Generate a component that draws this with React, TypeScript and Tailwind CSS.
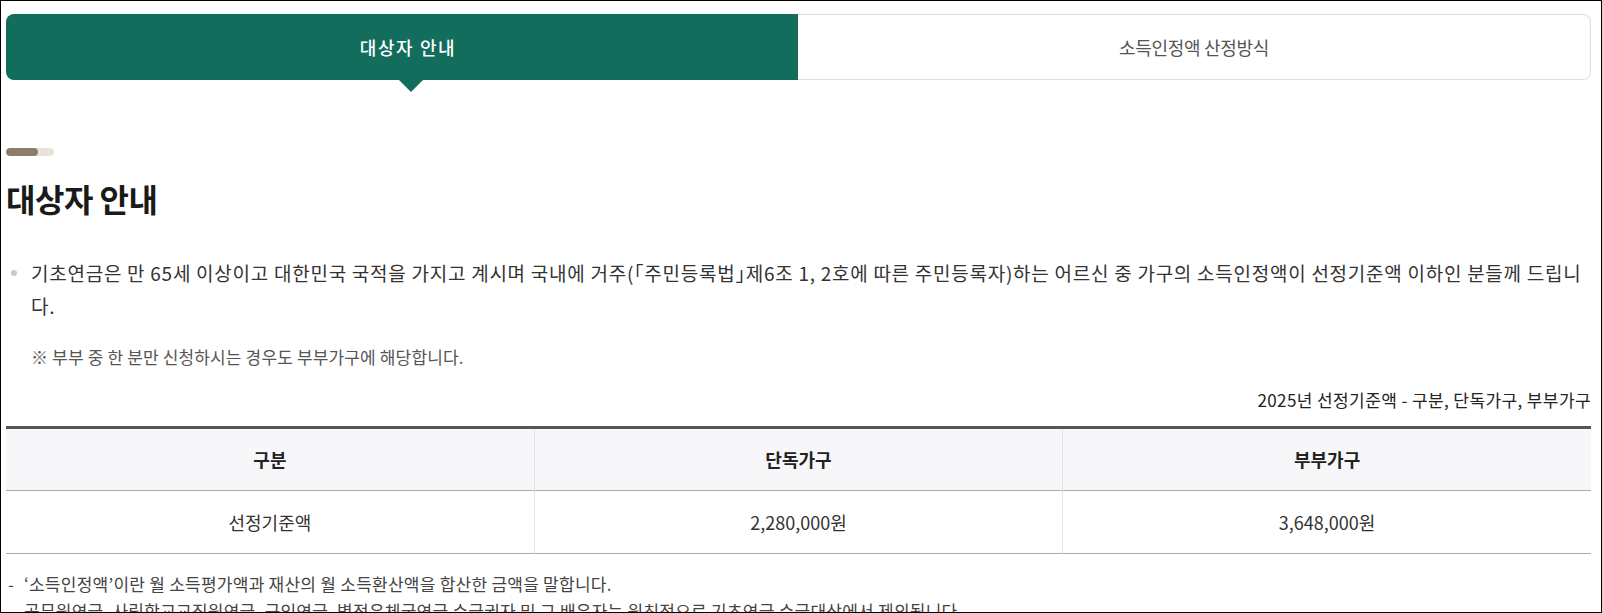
import React from "react";

const FONT = { fontFamily: '"Noto Sans CJK KR", "Noto Sans", sans-serif' };

export default function App() {
  return (
    <div
      className="w-[1602px] h-[613px] border border-black overflow-hidden bg-white box-border"
      style={FONT}
    >
      <div className="pl-[5px] pr-[10px] pt-[13px]">
        {/* Tabs */}
        <div className="flex h-[66px]">
          <div className="relative flex-1 min-w-0 bg-[#126d5c] rounded-l-lg flex items-center justify-center">
            <span className="pl-[12px] text-white text-[18px] font-medium tracking-[1.6px]">대상자 안내</span>
            <div className="absolute top-full left-[393px] w-0 h-0 border-l-[12px] border-r-[12px] border-t-[12px] border-l-transparent border-r-transparent border-t-[#126d5c]" />
          </div>
          <div className="flex-1 min-w-0 border border-l-0 border-[#dddddd] rounded-r-lg flex items-center justify-center">
            <span className="text-[#555555] text-[18px] tracking-[-0.3px]">소득인정액 산정방식</span>
          </div>
        </div>

        {/* Decorative bar */}
        <div className="mt-[68px] flex w-[48px] h-[8px] rounded-full overflow-hidden bg-[#e9e2d8]">
          <div className="w-[32px] h-full bg-[#8c7d69] rounded-full" />
        </div>

        {/* Heading */}
        <h2 className="mt-[22px] text-[32px] leading-[40px] font-bold text-[#1a1a1a] tracking-[-0.5px]">
          대상자 안내
        </h2>

        {/* Paragraph */}
        <div className="mt-[38px] relative pl-[25px]">
          <span className="absolute left-[5px] top-[14px] w-[6px] h-[6px] rounded-full bg-[#c9c9c9]" />
          <p className="text-[19px] leading-[33px] text-[#333333] tracking-[0.74px]">
            기초연금은 만 65세 이상이고 대한민국 국적을 가지고 계시며 국내에 거주(｢주민등록법｣제6조 1, 2호에 따른 주민등록자)하는 어르신 중 가구의 소득인정액이 선정기준액 이하인 분들께 드립니
            <br />
            다.
          </p>
          <p className="mt-[23px] text-[17px] leading-[24px] text-[#555555] tracking-[0.15px]">
            ※ 부부 중 한 분만 신청하시는 경우도 부부가구에 해당합니다.
          </p>
        </div>

        {/* Caption */}
        <p className="mt-[19px] text-right text-[17px] leading-[24px] text-[#222222] tracking-[0.4px]">
          2025년 선정기준액 - 구분, 단독가구, 부부가구
        </p>

        {/* Table */}
        <table className="mt-[14px] w-full table-fixed border-collapse border-t-[3px] border-t-[#555555]">
          <thead>
            <tr className="h-[63px] bg-[#f7f7f9] border-b border-b-[#aaaaaa]">
              <th className="text-[18px] font-semibold text-[#222222] border-r border-r-[#e2e2e2]">구분</th>
              <th className="text-[18px] font-semibold text-[#222222] border-r border-r-[#e2e2e2]">단독가구</th>
              <th className="text-[18px] font-semibold text-[#222222]">부부가구</th>
            </tr>
          </thead>
          <tbody>
            <tr className="h-[63px] border-b border-b-[#aaaaaa]">
              <td className="text-center text-[18px] text-[#333333] border-r border-r-[#e2e2e2]">선정기준액</td>
              <td className="text-center text-[18px] text-[#333333] border-r border-r-[#e2e2e2]">2,280,000원</td>
              <td className="text-center text-[18px] text-[#333333]">3,648,000원</td>
            </tr>
          </tbody>
        </table>

        {/* Notes */}
        <div className="mt-[16px] text-[17px] leading-[27px] text-[#444444] tracking-[0.25px]">
          <div className="flex">
            <span className="w-[18px] pl-[2px] shrink-0">-</span>
            <p>‘소득인정액’이란 월 소득평가액과 재산의 월 소득환산액을 합산한 금액을 말합니다.</p>
          </div>
          <div className="flex">
            <span className="w-[18px] pl-[2px] shrink-0">-</span>
            <p>공무원연금, 사립학교교직원연금, 군인연금, 별정우체국연금 수급권자 및 그 배우자는 원칙적으로 기초연금 수급대상에서 제외됩니다.</p>
          </div>
        </div>
      </div>
    </div>
  );
}
